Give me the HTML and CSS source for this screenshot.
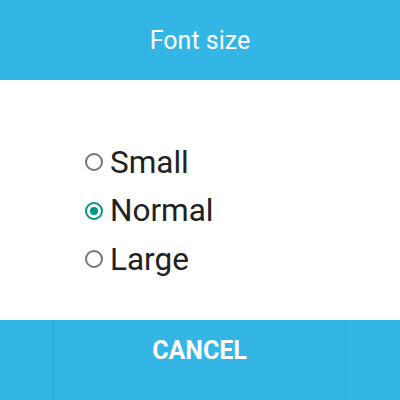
FILE: index.html
```html
<!DOCTYPE html>
<html>
<head>
<meta charset="utf-8">
<link rel="stylesheet" href="styles.css">
</head>
<body>
<div class="dialog">
  <header class="title">Font size</header>
  <main class="content">
    <ul class="options">
      <li class="option"><span class="radio"></span><span class="label">Small</span></li>
      <li class="option"><span class="radio checked"></span><span class="label">Normal</span></li>
      <li class="option"><span class="radio"></span><span class="label">Large</span></li>
    </ul>
  </main>
  <footer class="buttons">
    <div class="side"></div>
    <div class="btn">CANCEL</div>
    <div class="side"></div>
  </footer>
</div>
</body>
</html>
```

FILE: styles.css
```css
html, body {
  margin: 0;
  padding: 0;
  background: #ffffff;
}
.dialog {
  width: 400px;
  height: 400px;
  display: flex;
  flex-direction: column;
  font-family: Roboto, "Liberation Sans", sans-serif;
}
.title {
  height: 80px;
  background: #33b5e5;
  color: #ffffff;
  font-size: 25px;
  display: flex;
  align-items: center;
  justify-content: center;
}
.content {
  height: 240px;
  padding: 58px 0 0 85px;
  box-sizing: border-box;
}
.options {
  list-style: none;
  margin: 0;
  padding: 0;
}
.option {
  height: 48.5px;
  display: flex;
  align-items: center;
}
.radio {
  width: 14px;
  height: 14px;
  border: 2px solid #757575;
  border-radius: 50%;
  box-sizing: content-box;
  margin-right: 7px;
  position: relative;
}
.radio.checked {
  border-color: #009482;
}
.radio.checked::after {
  content: "";
  position: absolute;
  left: 3px;
  top: 3px;
  width: 8px;
  height: 8px;
  border-radius: 50%;
  background: #009482;
}
.label {
  font-size: 31.5px;
  color: #212121;
  line-height: 1;
}
.buttons {
  height: 80px;
  background: #33b5e5;
  display: grid;
  grid-template-columns: 53px 1fr 54px;
}
.side {
  height: 100%;
}
.btn {
  border-left: 1px solid #2ea6d6;
  border-right: 1px solid #2ea6d6;
  color: #ffffff;
  font-weight: bold;
  font-size: 25px;
  text-align: center;
  padding-top: 16px;
  line-height: 30px;
}
```
